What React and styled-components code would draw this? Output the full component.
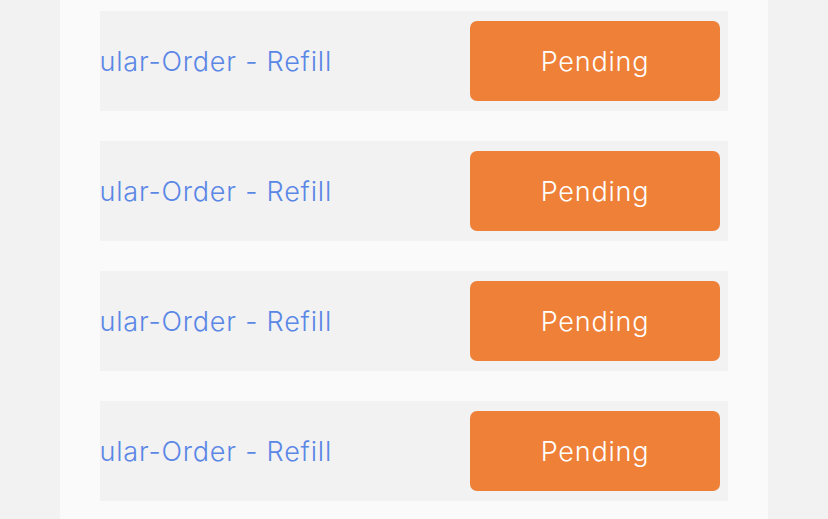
import React from "react";
import styled, { createGlobalStyle } from "styled-components";

const GlobalStyle = createGlobalStyle`
  body {
    margin: 0;
    background: #f2f2f2;
    font-family: "Inter", "Noto Sans", sans-serif;
  }
`;

const Page = styled.div`
  display: flex;
  padding-left: 60px;
`;

const Panel = styled.div`
  width: 708px;
  background: #fafafa;
  padding: 11px 40px 30px;
  box-sizing: border-box;
  display: flex;
  flex-direction: column;
  gap: 30px;
`;

const Row = styled.div`
  height: 100px;
  background: #f2f2f2;
  display: flex;
  align-items: center;
  padding-right: 8px;
  overflow: hidden;
`;

const Label = styled.div`
  width: 232px;
  overflow: hidden;
  display: flex;
  justify-content: flex-end;
  white-space: nowrap;
  font-size: 27px;
  font-weight: 300;
  letter-spacing: 0.8px;
  color: #5a87e6;
`;

const Status = styled.button`
  margin-left: auto;
  width: 250px;
  height: 80px;
  border: none;
  border-radius: 7px;
  background: #ef8037;
  color: #ffffff;
  font-family: "Inter", "Noto Sans", sans-serif;
  font-size: 27px;
  font-weight: 300;
  letter-spacing: 0.8px;
  cursor: pointer;
`;

const orders = [
  { id: 1, name: "Regular-Order - Refill", status: "Pending" },
  { id: 2, name: "Regular-Order - Refill", status: "Pending" },
  { id: 3, name: "Regular-Order - Refill", status: "Pending" },
  { id: 4, name: "Regular-Order - Refill", status: "Pending" },
];

const App = () => {
  return (
    <>
      <GlobalStyle />
      <Page>
        <Panel>
          {orders.map((o) => (
            <Row key={o.id}>
              <Label>
                <span>{o.name}</span>
              </Label>
              <Status>{o.status}</Status>
            </Row>
          ))}
        </Panel>
      </Page>
    </>
  );
};

export default App;
